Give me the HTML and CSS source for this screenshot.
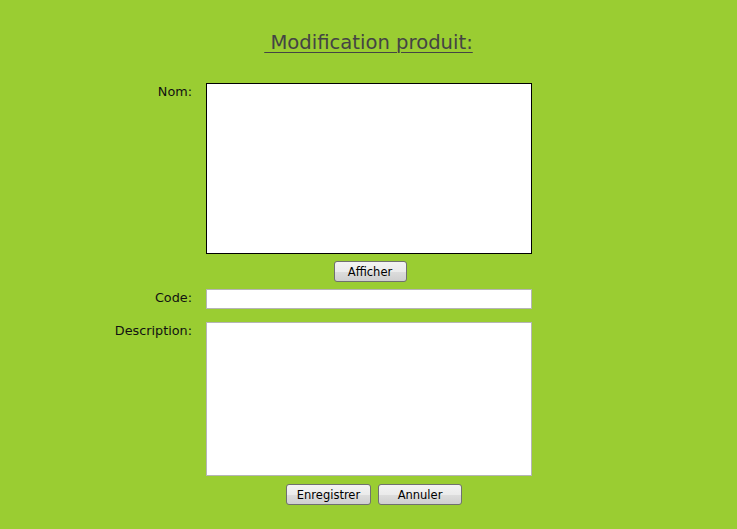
FILE: index.html
```html
<!DOCTYPE html>
<html lang="fr">
<head>
<meta charset="utf-8">
<title>Modification produit</title>
<link rel="stylesheet" href="styles.css">
</head>
<body>
<div class="page">
  <h1 class="title">&nbsp;Modification produit:</h1>
  <form class="form">
    <label class="label">Nom:</label>
    <div class="field">
      <div class="namebox"></div>
      <div class="center"><button type="button" class="btn btn-show">Afficher</button></div>
    </div>
    <label class="label">Code:</label>
    <div class="field"><input class="input" type="text"></div>
    <label class="label spaced">Description:</label>
    <div class="field spaced"><textarea class="textarea"></textarea></div>
  </form>
  <div class="actions">
    <button type="button" class="btn btn-save">Enregistrer</button>
    <button type="button" class="btn btn-cancel">Annuler</button>
  </div>
</div>
</body>
</html>
```
FILE: styles.css
```css
html, body {
  margin: 0;
  padding: 0;
  background: #9acd32;
  font-family: "DejaVu Sans", Verdana, sans-serif;
  font-size: 12px;
  color: #111;
}
.page {
  width: 737px;
  height: 529px;
  box-sizing: border-box;
  padding-top: 31px;
}
.title {
  margin: 0 0 29px 0;
  text-align: center;
  font-weight: normal;
  font-size: 19.6px;
  line-height: 23px;
  color: #444;
  text-decoration: underline;
  text-underline-offset: 3px;
  text-decoration-thickness: 1px;
}
.form {
  display: grid;
  grid-template-columns: 192px 326px;
  column-gap: 14px;
  row-gap: 7px;
  margin: 0;
}
.label {
  text-align: right;
  padding-top: 1px;
  line-height: 15px;
  font-size: 12.8px;
}
.spaced {
  margin-top: 6px;
}
.field {
  display: flex;
  flex-direction: column;
}
.namebox {
  height: 169px;
  border: 1px solid #000;
  background: #fff;
}
.center {
  display: flex;
  justify-content: center;
  padding-top: 7px;
  padding-left: 2px;
}
.input {
  box-sizing: border-box;
  width: 326px;
  height: 20px;
  margin: 0;
  border: 1px solid #b5b5b5;
  background: #fff;
  font: inherit;
}
.textarea {
  box-sizing: border-box;
  width: 326px;
  height: 154px;
  margin: 0;
  border: 1px solid #b5b5b5;
  background: #fff;
  resize: none;
  font: inherit;
}
.btn {
  box-sizing: border-box;
  height: 21px;
  margin: 0;
  padding: 0;
  border: 1px solid #707070;
  border-radius: 3px;
  background: linear-gradient(#f3f3f3 0%, #ebebeb 50%, #dddddd 51%, #cfcfcf 100%);
  font-family: "DejaVu Sans", Verdana, sans-serif;
  font-size: 11.5px;
  color: #000;
}
.btn-show { width: 73px; }
.btn-save { width: 85px; }
.btn-cancel { width: 84px; }
.actions {
  display: flex;
  justify-content: flex-start;
  gap: 7px;
  padding-left: 286px;
  margin-top: 8px;
}
```
